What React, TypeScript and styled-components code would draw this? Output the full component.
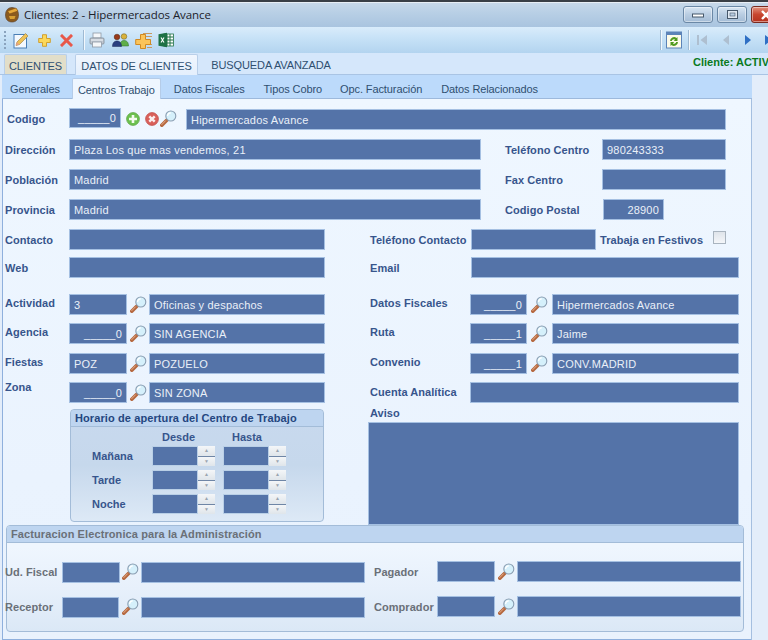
import React from "react";
import styled, { createGlobalStyle } from "styled-components";

const Global = createGlobalStyle`
  html, body { margin: 0; padding: 0; overflow: hidden; background: #e3edfa; }
  #root { width: 768px; height: 640px; }
`;

const Win = styled.div`
  width: 768px; height: 640px; overflow: hidden; display: flex; flex-direction: column;
  background: #e3edfa; font-family: "Liberation Sans", Arial, sans-serif; font-size: 11px;
`;
const TitleBar = styled.div`
  height: 27px; flex: none; display: flex; align-items: center; padding: 0 0 0 4px; box-sizing: border-box; overflow: hidden;
  background: linear-gradient(#c9d9e9, #b9d0e6 40%, #a9c4df); border-top: 2px solid #3a3f46;
  box-shadow: inset 0 1px 0 #e8eef5;
`;
const TitleText = styled.span`
  margin-left: 4px; font: 11.5px "Open Sans", sans-serif; letter-spacing: -.06px; color: #1c222a; flex: 1; white-space: nowrap;
`;
const WinBtn = styled.div<{ $red?: boolean; $w: number; $ml: number; $mr?: number }>`
  width: ${p => p.$w}px; margin-left: ${p => p.$ml}px; margin-right: ${p => p.$mr ?? 0}px; height: 17px; flex: none; box-sizing: border-box;
  border: 1px solid ${p => (p.$red ? "#7a2a20" : "#6b88a6")}; border-radius: 3px;
  display: flex; align-items: center; justify-content: center;
  background: ${p => (p.$red ? "linear-gradient(#e3937f, #c8452f 50%, #b5321f)" : "linear-gradient(#d9e6f3, #b9cde2 50%, #a4bcd6)")};
  box-shadow: inset 0 0 0 1px rgba(255,255,255,.45);
`;
const Toolbar = styled.div`
  height: 26px; flex: none; display: flex; align-items: center; box-sizing: border-box; padding-left: 4px; overflow: hidden;
  background: linear-gradient(#d9ecfb, #c4e0f6 50%, #b3d4ef);
`;
const Grip = styled.div`
  width: 2px; height: 18px; flex: none;
  background: repeating-linear-gradient(#8aa3bd 0 2px, transparent 2px 4px);
`;
const ToolIcon = styled.div<{ $ml: number; $w?: number }>`
  margin-left: ${p => p.$ml}px; flex: none; width: ${p => p.$w ?? 16}px; height: 18px; display: flex; align-items: center; justify-content: center;
`;
const Sep = styled.div<{ $ml: number }>`
  margin-left: ${p => p.$ml}px; width: 1px; height: 20px; background: #f2f8fd; box-shadow: -1px 0 0 #9fbad3; flex: none;
`;
const MainTabs = styled.div`
  height: 22px; flex: none; display: flex; align-items: flex-end; box-sizing: border-box; padding-left: 4px;
  background: #d5e7fb; border-bottom: 1px solid #a9c4e4;
`;
const MainTab = styled.div<{ $kind: "tan" | "on" | "off"; $w: number; $ml: number }>`
  width: ${p => p.$w}px; margin-left: ${p => p.$ml}px; height: ${p => (p.$kind === "on" ? 21 : 20)}px; flex: none; box-sizing: border-box; padding-top: 2px;
  display: flex; align-items: center; justify-content: center; white-space: nowrap; color: #2f4f70; font-size: 11px; letter-spacing: -.1px;
  background: ${p => (p.$kind === "tan" ? "#e2dec9" : p.$kind === "on" ? "linear-gradient(#f0f6fe,#e4effc)" : "transparent")};
  border: ${p => (p.$kind === "off" ? "none" : "1px solid #b9cfe9")}; border-bottom: none; border-radius: 2px 2px 0 0;
  margin-bottom: ${p => (p.$kind === "on" ? -1 : 0)}px;
`;
const Status = styled.span`
  margin-left: auto; align-self: center; margin-right: -40px; margin-top: -3px; width: 115px; flex: none; white-space: nowrap;
  color: #0a7a1e; font-weight: bold; font-size: 11px;
`;
const Workspace = styled.div`
  width: 750px; margin-left: 2px; flex: 1; display: flex; flex-direction: column; min-height: 0;
`;
const SubTabs = styled.div`
  height: 24px; flex: none; display: flex; align-items: flex-end; background: #bcdafb; border-bottom: 1px solid #9db9dc; box-sizing: border-box;
`;
const SubTab = styled.div<{ $on?: boolean; $ml: number; $w?: number }>`
  margin-left: ${p => p.$ml}px; width: ${p => (p.$w ? `${p.$w}px` : "auto")}; height: 21px; flex: none; box-sizing: border-box; padding-top: 2px;
  display: flex; align-items: center; justify-content: center; color: #2f4f70; white-space: nowrap; font-size: 11px; letter-spacing: -.1px;
  ${p => p.$on && "background: #eef6ff; border: 1px solid #b5cce8; border-bottom: none; margin-bottom: -1px; border-radius: 2px 2px 0 0;"}
`;
const Panel = styled.div`
  height: 541px; flex: none; box-sizing: border-box; padding-top: 9px; overflow: hidden;
  background: linear-gradient(#eff7ff, #eaf3fe 70%, #e9f2fd);
  box-shadow: inset 1px 0 0 #8fb0dd, inset -1px 0 0 #a5bfe0, inset 0 -1px 0 #8fb0dd;
`;
const Row = styled.div<{ $mt?: number; $h?: number }>`
  display: flex; align-items: center; height: ${p => p.$h ?? 21}px; margin-top: ${p => p.$mt ?? 0}px;
`;
const Label = styled.div<{ $w: number; $ml?: number; $up?: number; $tone?: "grey" }>`
  width: ${p => p.$w}px; margin-left: ${p => p.$ml ?? 0}px; flex: none; box-sizing: border-box; white-space: nowrap;
  padding-bottom: ${p => p.$up ?? 0}px; font-size: 11px; font-weight: bold; letter-spacing: .05px;
  color: ${p => (p.$tone ? "#6a7078" : "#37558c")};
`;
const Field = styled.div<{ $w: number; $h?: number; $right?: boolean }>`
  width: ${p => p.$w}px; height: ${p => p.$h ?? 21}px; flex: none; box-sizing: border-box; padding: 0 4px;
  background: #5473a8; border: 1px solid #a5c0e2; color: #eaf0f8; font-size: 11px; letter-spacing: .2px; white-space: nowrap; overflow: hidden;
  display: flex; align-items: center; justify-content: ${p => (p.$right ? "flex-end" : "flex-start")};
`;
const RaisedField = styled(Field)`
  margin-bottom: 2px;
`;
const LoweredField = styled(Field)`
  margin-top: 1px;
`;
const ShiftedField = styled(Field)`
  margin-top: 2px;
`;
const IconSlot = styled.div<{ $w: number }>`
  width: ${p => p.$w}px; flex: none; display: flex; justify-content: center; align-items: center; height: 20px;
`;
const CodeIcons = styled.div`
  width: 65px; flex: none; display: flex; align-items: center; padding-left: 5px; box-sizing: border-box; margin-top: -1px;
`;
const CrossSlot = styled.div`
  margin: 0 1px 0 5px; display: flex;
`;
const Check = styled.div`
  width: 13px; height: 13px; flex: none; box-sizing: border-box; border: 1px solid #a9b4bf; background: linear-gradient(#dfe4ea, #f4f6f9); margin-top: -4px;
`;
const Lower = styled.div`
  display: flex; height: 122px;
`;
const LeftCol = styled.div`
  width: 366px; flex: none; padding: 6px 0 0 68px; box-sizing: border-box;
`;
const RightCol = styled.div`
  flex: 1; padding-top: 4px;
`;
const AvisoLabel = styled(Label)`
  height: 15px; line-height: 13px;
`;
const Aviso = styled.div`
  width: 371px; height: 103px; box-sizing: border-box; background: #5473a8; border: 1px solid #a5c0e2;
`;
const Horario = styled.div`
  width: 254px; height: 113px; box-sizing: border-box; border: 1px solid #a3bcd8; border-radius: 4px; overflow: hidden;
  background: linear-gradient(#c8d9ee, #c6d8ec 50%, #dde9f6);
`;
const GroupHeader = styled.div<{ $grey?: boolean }>`
  height: 17px; box-sizing: border-box; padding-left: 4px; display: flex; align-items: center; background: #bed5f0; border-radius: 3px 3px 0 0;
  border-bottom: 1px solid #a3bcd8; font-weight: bold; font-size: 11px; letter-spacing: .1px; color: ${p => (p.$grey ? "#6a7078" : "#24467f")};
`;
const HourHead = styled.div`
  display: flex; height: 19px; align-items: center; padding-left: 91px; font-weight: bold; font-size: 11px; color: #37558c;
`;
const HourLabelCell = styled.span<{ $w: number }>`
  width: ${p => p.$w}px; flex: none;
`;
const HourRow = styled.div`
  display: flex; align-items: center; height: 20px; margin-bottom: 4px; padding-left: 21px;
`;
const HourName = styled.div`
  width: 60px; flex: none; font-weight: bold; font-size: 11px; color: #37558c;
`;
const Spin = styled.div`
  width: 63px; height: 20px; flex: none; display: flex; margin-right: 8px; box-sizing: border-box;
`;
const SpinInput = styled.div`
  width: 46px; background: #5473a8; flex: none; border: 1px solid #b9cfe6; box-sizing: border-box;
`;
const SpinBtns = styled.div`
  width: 17px; flex: none; display: flex; flex-direction: column; gap: 1px; background: #6f86a6;
`;
const SpinBtn = styled.div`
  flex: 1; background: linear-gradient(#f4f6f8, #dfe5ea); color: #9aa4b0; font-size: 5px; line-height: 9px; text-align: center;
`;
const Factura = styled.div`
  width: 738px; margin-left: 4px; height: 107px; box-sizing: border-box; border: 1px solid #a3bcd8; border-radius: 4px;
  background: linear-gradient(#eff6fe 20%, #e7f0fb 60%, #dbe8f6);
`;
const FacturaBody = styled.div`
  margin-left: -2px; padding-top: 18px;
`;

const Mag = () => (
  <svg width={17} height={17} viewBox="0 0 17 17">
    <path d="M1.800 15.200 L6.500 10.500" stroke="#b5683f" strokeWidth="3.600" strokeLinecap="round" />
    <path d="M1.800 14.600 L5.500 10.800" stroke="#e7b08e" strokeWidth="1" strokeLinecap="round" />
    <circle cx="10.800" cy="6" r="5" fill="#d5f0fb" stroke="#8a9eb2" strokeWidth="1.100" />
    <path d="M7.600 6a3.200 3.200 0 0 1 3.200-3.200" stroke="#fff" strokeWidth="1.300" fill="none" />
  </svg>
);
const PlusRound = () => (
  <svg width="14" height="14" viewBox="0 0 14 14">
    <circle cx="7" cy="7" r="6.400" fill="#6cc04e" stroke="#62a84a" strokeWidth=".8" />
    <path d="M7 3v8M3 7h8" stroke="#f4fbef" strokeWidth="2.600" />
  </svg>
);
const CrossRound = () => (
  <svg width="14" height="14" viewBox="0 0 14 14">
    <circle cx="7" cy="7" r="6.400" fill="#d9605a" stroke="#c2504c" strokeWidth=".8" />
    <path d="M4.300 4.300l5.400 5.400M9.700 4.300l-5.400 5.400" stroke="#fbeeee" strokeWidth="2.400" />
  </svg>
);
const AppIcon = () => (
  <svg width="16" height="17" viewBox="0 0 16 17">
    <path d="M8 1.500c4 0 6.500 3 6.500 7.500s-2.500 7-6.500 7-6.500-2.500-6.500-7 2.500-7.500 6.500-7.500z" fill="#8a5a1e" stroke="#5e4a3a" strokeWidth=".7" />
    <path d="M3.500 5l8.500-3 2 3-8.500 3z" fill="#e6a93a" stroke="#7a4a14" strokeWidth=".6" />
    <path d="M5 10h6.500l-1 3H6z" fill="#d8a032" />
  </svg>
);
const EditIcon = () => (
  <svg width="16" height="17" viewBox="0 0 16 17">
    <rect x="1" y="2.500" width="12.500" height="13.500" fill="#f4f9fe" stroke="#4a7fb5" />
    <path d="M3 13.500l1-3.500 8.500-8.500 2.500 2.500-8.500 8.500z" fill="#eec257" stroke="#a68a4a" strokeWidth=".7" />
    <path d="M3 13.500l1-3.500 2.500 2.500z" fill="#e8a184" />
  </svg>
);
const PlusIcon = () => (
  <svg width="13" height="13" viewBox="0 0 13 13">
    <path d="M4.500 .7h4v3.800h3.800v4H8.500v3.800h-4V8.500H.7v-4h3.800z" fill="#fbd85a" stroke="#cf9b24" strokeWidth=".9" />
  </svg>
);
const XIcon = () => (
  <svg width="13" height="13" viewBox="0 0 13 13">
    <path d="M2 2l9 9M11 2l-9 9" stroke="#e8584a" strokeWidth="3" strokeLinecap="square" />
  </svg>
);
const Printer = () => (
  <svg width="16" height="16" viewBox="0 0 16 16">
    <rect x="4" y="1" width="8" height="5" fill="#f4f7fa" stroke="#8f9aa6" strokeWidth=".8" />
    <rect x="1" y="6" width="14" height="6" rx="1" fill="#c0c8d2" stroke="#808a96" strokeWidth=".8" />
    <rect x="3.500" y="10" width="9" height="5" fill="#f4f6f8" stroke="#8f9aa6" strokeWidth=".8" />
    <path d="M2 8h12" stroke="#eef2f6" />
  </svg>
);
const People = () => (
  <svg width="17" height="14" viewBox="0 0 17 14">
    <circle cx="12" cy="3.500" r="2.800" fill="#d9b23c" stroke="#6b5a18" strokeWidth=".5" />
    <path d="M8 13c0-4 1.500-5.500 4-5.500s4.500 1.500 4.500 5.500z" fill="#5fae4a" stroke="#2f6d27" strokeWidth=".5" />
    <circle cx="5" cy="4" r="2.800" fill="#9a3a1a" stroke="#4c2410" strokeWidth=".5" />
    <path d="M.5 13.500c0-4 2-5.500 4.500-5.500s4.500 1.500 4.500 5.500z" fill="#2a3f80" stroke="#1d2d5b" strokeWidth=".5" />
  </svg>
);
const PlusDoc = () => (
  <svg width="18" height="17" viewBox="0 0 18 17">
    <path d="M8 1.500h9M10 4.500h7M12 12.500h5M12 15.500h5" stroke="#c89a62" strokeWidth="1.200" />
    <path d="M5.500 2.500h5v5h5v5h-5v4h-5v-4H.7v-5h4.800z" fill="#fbc45a" stroke="#d08a24" strokeWidth="1" />
  </svg>
);
const Excel = () => (
  <svg width="16" height="16" viewBox="0 0 16 16">
    <rect x="6" y="2" width="9.500" height="12" fill="#fff" stroke="#1e7145" strokeWidth=".8" />
    <path d="M9 2v12M12 2v12M6 5h9M6 8h9M6 11h9" stroke="#1e7145" strokeWidth="1" />
    <path d="M.5 2.200L9 .8v14.400L.5 13.800z" fill="#1e7145" />
    <path d="M3 5.500l3 5M6 5.500l-3 5" stroke="#fff" strokeWidth="1.100" />
  </svg>
);
const Refresh = () => (
  <svg width="16" height="18" viewBox="0 0 16 18">
    <rect x=".5" y="1" width="15" height="16" fill="#fdfbe9" stroke="#5c83b8" />
    <rect x=".5" y="1" width="15" height="3" fill="#5c83b8" />
    <path d="M4 10a4 4 0 0 1 6.500-3l1-1v4H7.800l1.300-1.400A2.200 2.200 0 0 0 5.800 10zM12 11a4 4 0 0 1-6.500 3l-1 1v-4h3.700l-1.300 1.400a2.200 2.200 0 0 0 3.300-1.400z" fill="#4f9a1e" />
  </svg>
);
const Nav = ({ d, c }: { d: string; c: string }) => (
  <svg width="12" height="14" viewBox="0 0 12 14"><path d={d} fill={c} /></svg>
);

const Search = () => <IconSlot $w={22}><Mag /></IconSlot>;

const SpinBox = () => (
  <Spin>
    <SpinInput />
    <SpinBtns><SpinBtn>▲</SpinBtn><SpinBtn>▼</SpinBtn></SpinBtns>
  </Spin>
);

const hours = ["Mañana", "Tarde", "Noche"];

export default function App() {
  return (
    <Win>
      <Global />
      <TitleBar>
        <AppIcon />
        <TitleText>Clientes: 2 - Hipermercados Avance</TitleText>
        <WinBtn $w={30} $ml={0}>
          <svg width="12" height="6" viewBox="0 0 12 6"><rect x=".5" y="2" width="11" height="3" fill="#fff" stroke="#47586b" /></svg>
        </WinBtn>
        <WinBtn $w={30} $ml={4}>
          <svg width="11" height="9" viewBox="0 0 11 9"><rect x=".5" y=".5" width="10" height="8" fill="#dfe8f2" stroke="#47586b" /><rect x="3" y="3" width="5" height="3" fill="#b9cde2" stroke="#47586b" strokeWidth=".6" /></svg>
        </WinBtn>
        <WinBtn $w={30} $ml={4} $mr={-13} $red>
          <svg width="12" height="10" viewBox="0 0 12 10"><path d="M2 1l8 8M10 1l-8 8" stroke="#fff" strokeWidth="2.400" /></svg>
        </WinBtn>
      </TitleBar>
      <Toolbar>
        <Grip />
        <ToolIcon $ml={7}><EditIcon /></ToolIcon>
        <ToolIcon $ml={7}><PlusIcon /></ToolIcon>
        <ToolIcon $ml={6}><XIcon /></ToolIcon>
        <Sep $ml={10} />
        <ToolIcon $ml={4}><Printer /></ToolIcon>
        <ToolIcon $ml={7} $w={17}><People /></ToolIcon>
        <ToolIcon $ml={6} $w={18}><PlusDoc /></ToolIcon>
        <ToolIcon $ml={5}><Excel /></ToolIcon>
        <Sep $ml={487} />
        <ToolIcon $ml={4}><Refresh /></ToolIcon>
        <Sep $ml={7} />
        <ToolIcon $ml={4}><Nav d="M1 2h2v10H1zM11 2v10L4.500 7z" c="#aebfd0" /></ToolIcon>
        <ToolIcon $ml={8}><Nav d="M9 2v10L3 7z" c="#aebfd0" /></ToolIcon>
        <ToolIcon $ml={6}><Nav d="M3 2v10l6-5z" c="#2f6fc4" /></ToolIcon>
        <ToolIcon $ml={6}><Nav d="M1 2v10l6.500-5zM9 2h2v10H9z" c="#2f6fc4" /></ToolIcon>
      </Toolbar>
      <MainTabs>
        <MainTab $kind="tan" $w={63} $ml={0}>CLIENTES</MainTab>
        <MainTab $kind="on" $w={123} $ml={8}>DATOS DE CLIENTES</MainTab>
        <MainTab $kind="off" $w={118} $ml={14}>BUSQUEDA AVANZADA</MainTab>
        <Status>Cliente: ACTIVO</Status>
      </MainTabs>
      <Workspace>
        <SubTabs>
          <SubTab $ml={8}>Generales</SubTab>
          <SubTab $on $ml={12} $w={89}>Centros Trabajo</SubTab>
          <SubTab $ml={13}>Datos Fiscales</SubTab>
          <SubTab $ml={19}>Tipos Cobro</SubTab>
          <SubTab $ml={18}>Opc. Facturación</SubTab>
          <SubTab $ml={19}>Datos Relacionados</SubTab>
        </SubTabs>
        <Panel>
          <Row $h={22}>
            <Label $ml={5} $w={62}>Codigo</Label>
            <RaisedField $w={52} $h={20} $right>_____0</RaisedField>
            <CodeIcons><PlusRound /><CrossSlot><CrossRound /></CrossSlot><Mag /></CodeIcons>
            <LoweredField $w={540}>Hipermercados Avance</LoweredField>
          </Row>
          <Row $mt={9}>
            <Label $ml={3} $w={64}>Dirección</Label>
            <Field $w={412}>Plaza Los que mas vendemos, 21</Field>
            <Label $ml={24} $w={97}>Teléfono Centro</Label>
            <Field $w={124}>980243333</Field>
          </Row>
          <Row $mt={9}>
            <Label $ml={3} $w={64}>Población</Label>
            <Field $w={412}>Madrid</Field>
            <Label $ml={24} $w={97}>Fax Centro</Label>
            <Field $w={124} />
          </Row>
          <Row $mt={9}>
            <Label $ml={3} $w={64}>Provincia</Label>
            <Field $w={412}>Madrid</Field>
            <Label $ml={24} $w={98}>Codigo Postal</Label>
            <Field $w={61} $right>28900</Field>
          </Row>
          <Row $mt={9}>
            <Label $ml={3} $w={64}>Contacto</Label>
            <Field $w={256} />
            <Label $ml={45} $w={101}>Teléfono Contacto</Label>
            <Field $w={125} />
            <Label $ml={4} $w={113}>Trabaja en Festivos</Label>
            <Check />
          </Row>
          <Row $mt={7}>
            <Label $ml={3} $w={64}>Web</Label>
            <Field $w={256} />
            <Label $ml={45} $w={101}>Email</Label>
            <Field $w={268} />
          </Row>
          <Row $mt={16}>
            <Label $ml={3} $w={64} $up={4}>Actividad</Label>
            <Field $w={58}>3</Field>
            <Search />
            <Field $w={176}>Oficinas y despachos</Field>
            <Label $ml={45} $w={100} $up={4}>Datos Fiscales</Label>
            <Field $w={57} $right>_____0</Field>
            <IconSlot $w={25}><Mag /></IconSlot>
            <Field $w={187}>Hipermercados Avance</Field>
          </Row>
          <Row $mt={8}>
            <Label $ml={3} $w={64} $up={4}>Agencia</Label>
            <Field $w={58} $right>_____0</Field>
            <Search />
            <Field $w={176}>SIN AGENCIA</Field>
            <Label $ml={45} $w={100} $up={4}>Ruta</Label>
            <Field $w={57} $right>_____1</Field>
            <IconSlot $w={25}><Mag /></IconSlot>
            <Field $w={187}>Jaime</Field>
          </Row>
          <Row $mt={9}>
            <Label $ml={3} $w={64} $up={4}>Fiestas</Label>
            <Field $w={58}>POZ</Field>
            <Search />
            <Field $w={176}>POZUELO</Field>
            <Label $ml={45} $w={100} $up={4}>Convenio</Label>
            <Field $w={57} $right>_____1</Field>
            <IconSlot $w={25}><Mag /></IconSlot>
            <Field $w={187}>CONV.MADRID</Field>
          </Row>
          <Row $mt={8}>
            <Label $ml={3} $w={64} $up={12}>Zona</Label>
            <Field $w={58} $right>_____0</Field>
            <Search />
            <Field $w={176}>SIN ZONA</Field>
            <Label $ml={45} $w={100} $up={2}>Cuenta Analítica</Label>
            <Field $w={269} />
          </Row>
          <Lower>
            <LeftCol>
              <Horario>
                <GroupHeader>Horario de apertura del Centro de Trabajo</GroupHeader>
                <HourHead>
                  <HourLabelCell $w={70}>Desde</HourLabelCell>
                  <HourLabelCell $w={60}>Hasta</HourLabelCell>
                </HourHead>
                {hours.map(h => (
                  <HourRow key={h}>
                    <HourName>{h}</HourName>
                    <SpinBox />
                    <SpinBox />
                  </HourRow>
                ))}
              </Horario>
            </LeftCol>
            <RightCol>
              <AvisoLabel $w={60} $ml={2}>Aviso</AvisoLabel>
              <Aviso />
            </RightCol>
          </Lower>
          <Factura>
            <GroupHeader $grey>Facturacion Electronica para la Administración</GroupHeader>
            <FacturaBody>
              <Row>
                <Label $w={57} $tone="grey">Ud. Fiscal</Label>
                <ShiftedField $w={58} />
                <IconSlot $w={21}><Mag /></IconSlot>
                <ShiftedField $w={224} />
                <Label $ml={9} $w={63} $tone="grey">Pagador</Label>
                <Field $w={58} />
                <IconSlot $w={22}><Mag /></IconSlot>
                <Field $w={224} />
              </Row>
              <Row $mt={14}>
                <Label $w={57} $tone="grey">Receptor</Label>
                <ShiftedField $w={57} />
                <IconSlot $w={22}><Mag /></IconSlot>
                <ShiftedField $w={224} />
                <Label $ml={9} $w={63} $tone="grey">Comprador</Label>
                <Field $w={58} />
                <IconSlot $w={22}><Mag /></IconSlot>
                <Field $w={224} />
              </Row>
            </FacturaBody>
          </Factura>
        </Panel>
      </Workspace>
    </Win>
  );
}
